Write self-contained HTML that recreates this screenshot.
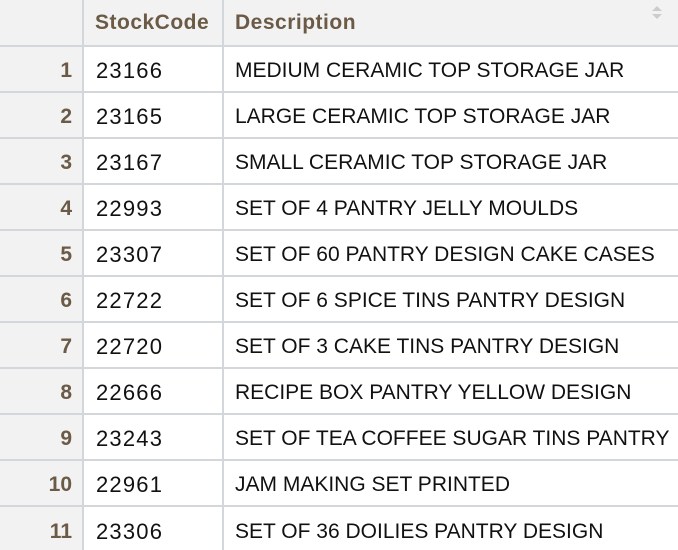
<!DOCTYPE html>
<html><head><meta charset="utf-8"><style>
html,body{margin:0;padding:0;width:678px;height:550px;overflow:hidden;background:#fff;font-family:"Liberation Sans",sans-serif;}
table{border-collapse:collapse;table-layout:fixed;width:680px;}
td,th{height:44px;padding:4px 0 0 0;font-size:21px;border-bottom:2px solid #d3d7dc;border-right:2px solid #d3d7dc;white-space:nowrap;overflow:hidden;box-sizing:border-box;vertical-align:middle;}
tr{height:46px;}
th{text-align:left;color:#6b5a45;font-weight:bold;background:#f2f2f2;padding-top:0;position:relative;font-size:21px;}
td.n{text-align:right;padding-right:10px;color:#6b5a45;font-weight:bold;background:#f2f2f2;font-size:21px;}
td.c{padding-left:12px;color:#111;font-size:22px;letter-spacing:1.2px;}
td.d{padding-left:11px;color:#111;border-right:none;}
tr:last-child td{border-bottom:none;}
.s{position:absolute;top:6px;width:0;height:0;border-left:5px solid transparent;border-right:5px solid transparent;}
</style></head><body>
<table>
<colgroup><col style="width:83px"><col style="width:140px"><col></colgroup>
<tr><th style="height:46px"></th><th style="padding-left:11px;height:46px;letter-spacing:0.5px">StockCode<span class="s" style="left:200px;border-bottom:6px solid #ccc"></span></th><th style="padding-left:11px;border-right:none;height:46px;letter-spacing:0.5px">Description<span class="s" style="left:428px;border-bottom:5px solid #ccc"></span><span class="s" style="left:428px;top:14px;border-top:5px solid #ccc"></span></th></tr>
<tr><td class="n">1</td><td class="c">23166</td><td class="d">MEDIUM CERAMIC TOP STORAGE JAR</td></tr>
<tr><td class="n">2</td><td class="c">23165</td><td class="d">LARGE CERAMIC TOP STORAGE JAR</td></tr>
<tr><td class="n">3</td><td class="c">23167</td><td class="d">SMALL CERAMIC TOP STORAGE JAR</td></tr>
<tr><td class="n">4</td><td class="c">22993</td><td class="d">SET OF 4 PANTRY JELLY MOULDS</td></tr>
<tr><td class="n">5</td><td class="c">23307</td><td class="d">SET OF 60 PANTRY DESIGN CAKE CASES</td></tr>
<tr><td class="n">6</td><td class="c">22722</td><td class="d">SET OF 6 SPICE TINS PANTRY DESIGN</td></tr>
<tr><td class="n">7</td><td class="c">22720</td><td class="d">SET OF 3 CAKE TINS PANTRY DESIGN</td></tr>
<tr><td class="n">8</td><td class="c">22666</td><td class="d">RECIPE BOX PANTRY YELLOW DESIGN</td></tr>
<tr><td class="n">9</td><td class="c">23243</td><td class="d">SET OF TEA COFFEE SUGAR TINS PANTRY</td></tr>
<tr><td class="n">10</td><td class="c">22961</td><td class="d">JAM MAKING SET PRINTED</td></tr>
<tr><td class="n">11</td><td class="c">23306</td><td class="d">SET OF 36 DOILIES PANTRY DESIGN</td></tr>
</table>
</body></html>
